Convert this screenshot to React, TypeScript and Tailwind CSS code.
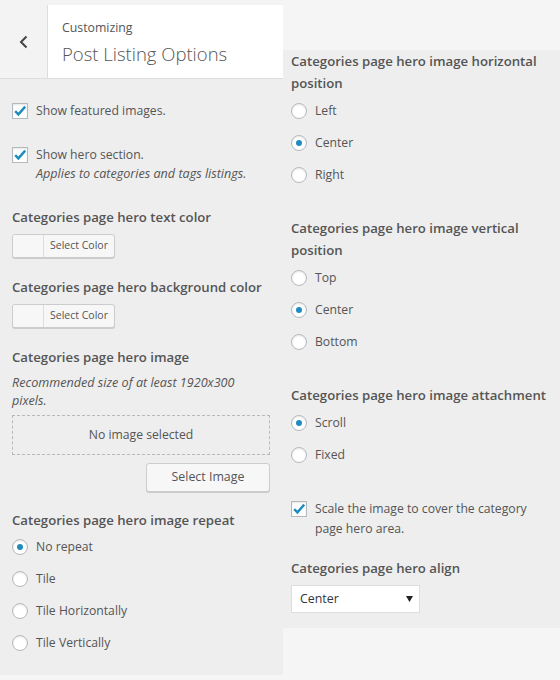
import React from "react";

const font = { fontFamily: '"Open Sans", "Noto Sans", sans-serif' };

function Checkbox() {
  return (
    <span className="relative flex h-[16px] w-[16px] shrink-0 items-center justify-center border border-[#b4b9be] bg-white shadow-[inset_0_1px_2px_rgba(0,0,0,0.1)]">
      <svg width="16" height="16" viewBox="0 0 16 16" className="absolute -left-[1px] -top-[1px]">
        <path d="M3.2 8.2 L6.4 11.4 L13.2 3.6" fill="none" stroke="#1e8cbe" strokeWidth="2.4" strokeLinecap="butt" strokeLinejoin="miter" />
      </svg>
    </span>
  );
}

function Radio({ checked, label }: { checked?: boolean; label: string }) {
  return (
    <div className="flex h-[16px] items-center">
      <span className="flex h-[16px] w-[16px] shrink-0 items-center justify-center rounded-full border border-[#b4b9be] bg-white shadow-[inset_0_1px_2px_rgba(0,0,0,0.1)]">
        {checked && <span className="h-[6px] w-[6px] rounded-full bg-[#1e8cbe]" />}
      </span>
      <span className="ml-[8px] text-[12.2px] leading-[16px] text-[#555]">{label}</span>
    </div>
  );
}

function RadioGroup({ items, selected }: { items: string[]; selected: string }) {
  return (
    <div className="flex flex-col gap-[16px]">
      {items.map((i) => (
        <Radio key={i} label={i} checked={i === selected} />
      ))}
    </div>
  );
}

function Heading({ children, className = "" }: { children: React.ReactNode; className?: string }) {
  return <div className={`text-[13.2px] font-semibold leading-[22px] text-[#555] ${className}`}>{children}</div>;
}

function ColorButton({ className = "" }: { className?: string }) {
  return (
    <div className={`flex h-[24px] w-[103px] overflow-hidden rounded-[3px] border border-[#ccc] bg-[#f7f7f7] shadow-[0_1px_0_#ccc] ${className}`}>
      <span className="w-[30px] bg-[#f7f7f7]" />
      <span className="flex flex-1 items-center justify-center border-l border-[#ddd] text-[10.5px] text-[#555]">Select Color</span>
    </div>
  );
}

export default function App() {
  return (
    <div className="flex h-[680px] w-[560px] bg-[#f5f5f5] text-[#555]" style={font}>
      {/* Left panel */}
      <div className="flex h-[675px] w-[283px] shrink-0 flex-col bg-[#eee]">
        <div className="flex h-[79px] border-b border-[#ddd] bg-[#f3f3f3]">
          <div className="flex w-[47px] items-center justify-center pt-[5px]">
            <svg width="12" height="16" viewBox="0 0 12 16">
              <path d="M8.5 2.5 L3 8 L8.5 13.5" fill="none" stroke="#444" strokeWidth="2" />
            </svg>
          </div>
          <div className="mt-[5px] flex flex-1 flex-col border-l border-[#ddd] bg-white pl-[14px]">
            <div className="mt-[13px] text-[12.3px] leading-[20px] text-[#555]">Customizing</div>
            <div className="mt-[3px] text-[18.5px] font-light leading-[26px] text-[#555]">Post Listing Options</div>
          </div>
        </div>

        <div className="flex flex-col pl-[12px] pr-[13px]">
          <div className="mt-[24px] flex items-start">
            <Checkbox />
            <span className="ml-[8px] text-[12.2px] leading-[16px] text-[#555]">Show featured images.</span>
          </div>

          <div className="mt-[28px] flex items-start">
            <Checkbox />
            <div className="ml-[8px] flex flex-col">
              <span className="text-[12.2px] leading-[16px] text-[#555]">Show hero section.</span>
              <span className="mt-[1px] text-[12.6px] italic leading-[20px] text-[#555]">Applies to categories and tags listings.</span>
            </div>
          </div>

          <Heading className="mt-[22px]">Categories page hero text color</Heading>
          <ColorButton className="mt-[6px]" />

          <Heading className="mt-[18px]">Categories page hero background color</Heading>
          <ColorButton className="mt-[6px]" />

          <Heading className="mt-[18px]">Categories page hero image</Heading>
          <div className="mt-[6px] text-[12.6px] italic leading-[18px] text-[#555]">
            Recommended size of at least 1920x300 pixels.
          </div>
          <div className="mt-[5px] flex h-[40px] items-center justify-center border border-dashed border-[#b4b9be] text-[12.2px] text-[#555]">
            No image selected
          </div>
          <div className="mt-[8px] flex justify-end">
            <div className="flex h-[29px] w-[124px] items-center justify-center rounded-[3px] border border-[#ccc] bg-[#f7f7f7] text-[12.4px] text-[#555] shadow-[0_1px_0_#ccc]">
              Select Image
            </div>
          </div>

          <Heading className="mt-[17px]">Categories page hero image repeat</Heading>
          <div className="mt-[8px]">
            <RadioGroup items={["No repeat", "Tile", "Tile Horizontally", "Tile Vertically"]} selected="No repeat" />
          </div>
        </div>
      </div>

      {/* Right panel */}
      <div className="flex flex-1 flex-col">
        <div className="h-[50px]" />
        <div className="flex h-[578px] flex-col bg-[#eee] pl-[8px] pr-[10px]">
          <Heading>Categories page hero image horizontal position</Heading>
          <div className="mt-[9px]">
            <RadioGroup items={["Left", "Center", "Right"]} selected="Center" />
          </div>

          <Heading className="mt-[34px]">Categories page hero image vertical position</Heading>
          <div className="mt-[9px]">
            <RadioGroup items={["Top", "Center", "Bottom"]} selected="Center" />
          </div>

          <Heading className="mt-[34px]">Categories page hero image attachment</Heading>
          <div className="mt-[9px]">
            <RadioGroup items={["Scroll", "Fixed"]} selected="Scroll" />
          </div>

          <div className="mt-[36px] flex items-start">
            <span className="mt-[2px]">
              <Checkbox />
            </span>
            <span className="ml-[8px] text-[12.2px] leading-[20px] text-[#555]">
              Scale the image to cover the category page hero area.
            </span>
          </div>

          <Heading className="mt-[18px]">Categories page hero align</Heading>
          <div className="relative mt-[6px] flex h-[28px] w-[129px] shrink-0 items-center border border-[#ddd] bg-white pl-[8px] text-[12.4px] text-[#32373c]">
            Center
            <svg width="7" height="6" viewBox="0 0 7 6" className="absolute right-[6px] top-[10px]">
              <path d="M0 0 L7 0 L3.5 6 Z" fill="#222" />
            </svg>
          </div>
        </div>
      </div>
    </div>
  );
}
